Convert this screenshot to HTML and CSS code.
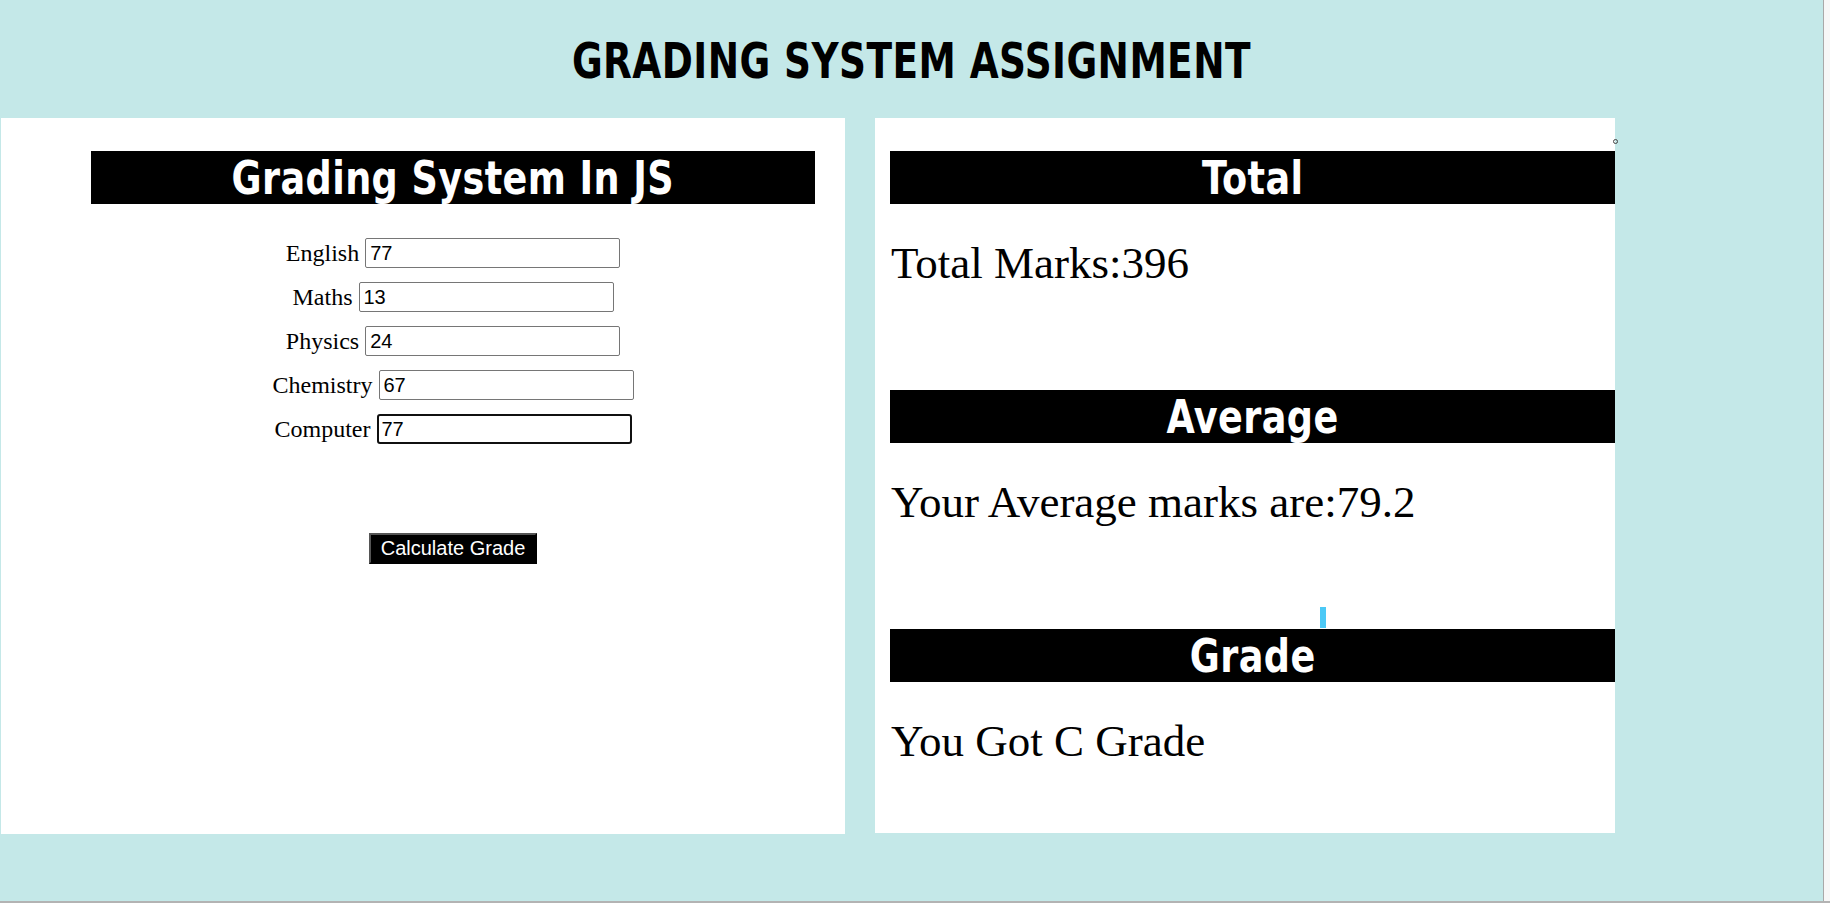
FILE: index.html
```html
<!DOCTYPE html>
<html lang="en">
<head>
<meta charset="utf-8">
<title>Grading System Assignment</title>
<link rel="stylesheet" href="styles.css">
</head>
<body>
<div class="page">
  <h1 class="title"><span class="squeeze squeeze-title">GRADING SYSTEM ASSIGNMENT</span></h1>
  <div class="panels">
    <section class="panel panel-left">
      <h2 class="bar"><span class="squeeze">Grading System In JS</span></h2>
      <form class="form">
        <div class="row"><label class="label">English</label><input class="field" type="text" value="77"></div>
        <div class="row"><label class="label">Maths</label><input class="field" type="text" value="13"></div>
        <div class="row"><label class="label">Physics</label><input class="field" type="text" value="24"></div>
        <div class="row"><label class="label">Chemistry</label><input class="field" type="text" value="67"></div>
        <div class="row"><label class="label">Computer</label><input class="field field-focus" type="text" value="77"></div>
        <button type="button" class="btn">Calculate Grade</button>
      </form>
    </section>
    <section class="panel panel-right">
      <span class="dot"></span>
      <div class="result">
        <h2 class="bar"><span class="squeeze">Total</span></h2>
        <p class="text">Total Marks:396</p>
      </div>
      <div class="result">
        <h2 class="bar"><span class="squeeze">Average</span></h2>
        <p class="text">Your Average marks are:79.2</p>
      </div>
      <div class="result">
        <h2 class="bar"><span class="squeeze">Grade</span></h2>
        <p class="text">You Got C Grade</p>
      </div>
      <span class="caret"></span>
    </section>
  </div>
</div>
</body>
</html>
```

FILE: styles.css
```css
html {
  background: #f7f7f7;
}
body {
  margin: 0;
  height: 901px;
  border-bottom: 2px solid #b3b3b3;
  overflow: hidden;
}
.page {
  width: 1823px;
  height: 901px;
  background: #c4e8e8;
  border-right: 1px solid #a9a9a9;
}
.title {
  margin: 0;
  height: 118px;
  box-sizing: border-box;
  padding-top: 4px;
  display: flex;
  align-items: center;
  justify-content: center;
  font-family: "DejaVu Sans Condensed", "Liberation Sans", sans-serif;
  font-weight: 700;
  font-size: 49px;
  letter-spacing: 0.5px;
  color: #000;
}
.squeeze {
  display: inline-block;
  transform: scaleX(0.865);
  transform-origin: center;
}
.squeeze-title {
  transform: scaleX(0.85);
}
.panels {
  display: flex;
  align-items: flex-start;
  gap: 30px;
  padding-left: 1px;
}
.panel {
  background: #fff;
  box-sizing: border-box;
  padding-top: 33px;
}
.panel-left {
  width: 844px;
  height: 716px;
  padding-left: 90px;
  padding-right: 30px;
}
.panel-right {
  position: relative;
  width: 740px;
  height: 715px;
  padding-left: 15px;
}
.bar {
  margin: 0;
  height: 53px;
  background: #000;
  color: #fff;
  text-align: center;
  font-family: "DejaVu Sans Condensed", "Liberation Sans", sans-serif;
  font-weight: 700;
  font-size: 47px;
  line-height: 53px;
  letter-spacing: 0.5px;
  white-space: nowrap;
}
.form {
  display: flex;
  flex-direction: column;
  align-items: center;
  gap: 14px;
  padding-top: 34px;
}
.row {
  display: flex;
  align-items: center;
  justify-content: center;
  gap: 6px;
  height: 30px;
}
.label {
  font-family: "Liberation Serif", serif;
  font-size: 24px;
  color: #000;
}
.field {
  box-sizing: border-box;
  width: 255px;
  height: 30px;
  margin: 0;
  padding: 0 4px;
  border: 1px solid #767676;
  border-radius: 2px;
  background: #fff;
  font-family: "Liberation Sans", Arial, sans-serif;
  font-size: 20px;
  color: #000;
  outline: none;
}
.field-focus {
  border: 2px solid #101010;
  border-radius: 3px;
  padding-left: 3px;
}
.btn {
  margin-top: 75px;
  height: 31px;
  padding: 0 10px;
  border: 2px solid;
  border-color: #555 #000 #000 #555;
  background: #000;
  color: #fff;
  font-family: "Liberation Sans", Arial, sans-serif;
  font-size: 20px;
  line-height: 27px;
}
.result {
  display: flex;
  flex-direction: column;
}
.text {
  margin: 34px 0 102px 1px;
  height: 50px;
  font-family: "Liberation Serif", serif;
  font-size: 45px;
  line-height: 50px;
  color: #000;
  white-space: nowrap;
}
.dot {
  position: absolute;
  right: -3px;
  top: 21px;
  width: 3px;
  height: 3px;
  border: 1px solid #444;
  border-radius: 50%;
}
.caret {
  position: absolute;
  left: 445px;
  top: 489px;
  width: 6px;
  height: 21px;
  background: #4cc9f6;
}
```
